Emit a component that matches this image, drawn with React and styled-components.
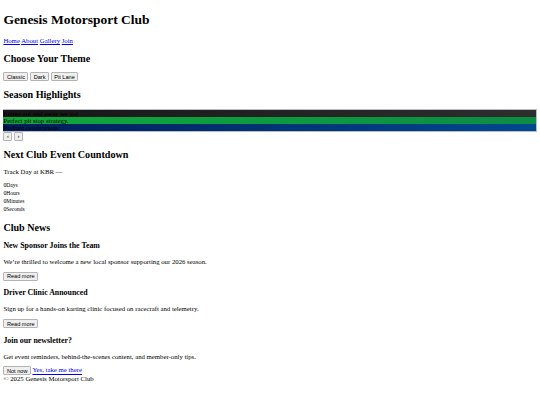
import React from "react";
import styled, { createGlobalStyle } from "styled-components";

const S = 0.421875;
const px = (v) => `${(v * S).toFixed(3)}px`;

const Global = createGlobalStyle`
  body {
    margin: ${px(8)};
    font-family: "Liberation Serif", "Times New Roman", serif;
    font-size: ${px(16)};
    color: #000;
    background: #fff;
  }
`;

const Title = styled.h1`
  font-family: "Liberation Serif", "Times New Roman", serif;
  font-size: ${px(32)};
  font-weight: bold;
  margin: ${px(21.44)} 0;
`;

const Nav = styled.nav`
  display: block;
`;

const Link = styled.a`
  color: #0000ee;
  text-decoration: underline;
`;

const H2 = styled.h2`
  font-size: ${px(24)};
  margin: ${px(19.92)} 0;
`;

const H3 = styled.h3`
  font-size: ${px(18.72)};
  margin: ${px(18.72)} 0;
`;

const P = styled.p`
  margin: ${px(16)} 0;
`;

const Btn = styled.button`
  font-family: "Liberation Sans", Arial, sans-serif;
  font-size: ${px(13.333)};
  padding: ${px(1)} ${px(6)};
  border: 1px solid #b4b4b4;
  border-radius: 1px;
  background: #efefef;
  color: #000;
  margin: 0;
  vertical-align: baseline;
`;

const Slider = styled.div`
  border: 1px solid #b9bcc4;
  border-left: none;
`;

const Slide = styled.div`
  background: ${(p) => p.$bg};
  color: #000;
  white-space: nowrap;
  overflow: hidden;
`;

const Count = styled.div`
  font-size: ${px(14)};
  line-height: ${px(18.4)};
`;

const Label = styled.span`
  font-size: ${px(13)};
`;

const slides = [
  { t: "Lights out and away we go!", bg: "linear-gradient(90deg,#161616,#2e2e2e)" },
  { t: "Perfect pit stop strategy.", bg: "linear-gradient(90deg,#10a83a,#0b8c44)" },
  { t: "Podium celebrations.", bg: "linear-gradient(90deg,#001e5a,#00488e)" },
];

export default function App() {
  return (
    <>
      <Global />
      <header>
        <Title>Genesis Motorsport Club</Title>
        <Nav>
          <Link href="#">Home</Link> <Link href="#">About</Link>{" "}
          <Link href="#">Gallery</Link> <Link href="#">Join</Link>
        </Nav>
      </header>
      <section>
        <H2>Choose Your Theme</H2>
        <div>
          <Btn>Classic</Btn> <Btn>Dark</Btn> <Btn>Pit Lane</Btn>
        </div>
      </section>
      <section>
        <H2>Season Highlights</H2>
        <Slider>
          {slides.map((s) => (
            <Slide key={s.t} $bg={s.bg}>{s.t}</Slide>
          ))}
        </Slider>
        <div>
          <Btn>‹</Btn> <Btn>›</Btn>
        </div>
      </section>
      <section>
        <H2>Next Club Event Countdown</H2>
        <P>Track Day at KBR —</P>
        {["Days", "Hours", "Minutes", "Seconds"].map((l) => (
          <Count key={l}>0<Label>{l}</Label></Count>
        ))}
      </section>
      <section>
        <H2>Club News</H2>
        <article>
          <H3>New Sponsor Joins the Team</H3>
          <P>We’re thrilled to welcome a new local sponsor supporting our 2026 season.</P>
          <Btn>Read more</Btn>
        </article>
        <article>
          <H3>Driver Clinic Announced</H3>
          <P>Sign up for a hands-on karting clinic focused on racecraft and telemetry.</P>
          <Btn>Read more</Btn>
        </article>
      </section>
      <section>
        <H3>Join our newsletter?</H3>
        <P>Get event reminders, behind-the-scenes content, and member-only tips.</P>
        <div>
          <Btn>Not now</Btn> <Link href="#">Yes, take me there</Link>
        </div>
      </section>
      <footer>© 2025 Genesis Motorsport Club</footer>
    </>
  );
}
